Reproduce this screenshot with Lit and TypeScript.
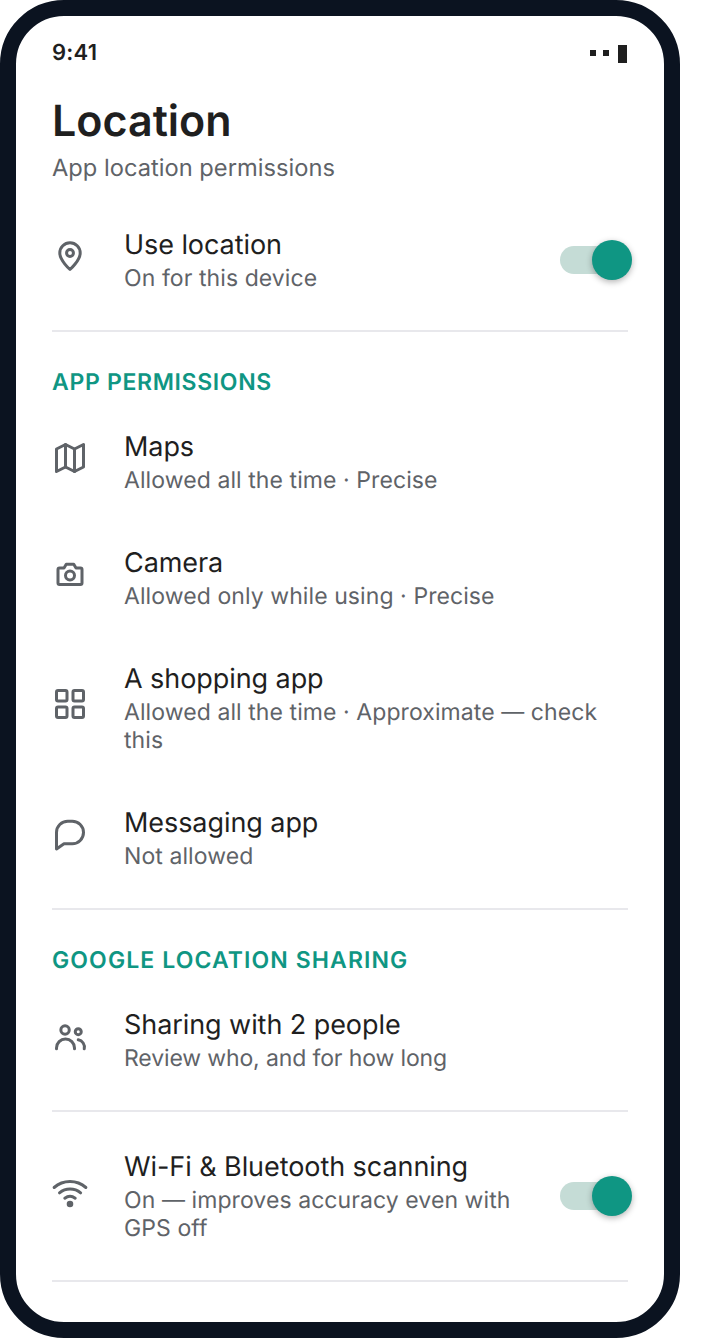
import { LitElement, html, css, svg, nothing } from "lit";
import { customElement } from "lit/decorators.js";

const icons: Record<string, unknown> = {
  pin: svg`<path d="M12 21s-6.8-6-6.8-11a6.8 6.8 0 0 1 13.6 0c0 5-6.8 11-6.8 11z"/><circle cx="12" cy="10" r="2.3"/>`,
  map: svg`<path d="M3 6l6-3 6 3 6-3v15l-6 3-6-3-6 3z"/><path d="M9 3v15M15 6v15"/>`,
  camera: svg`<path d="M5 8h3l1.5-2.5h5L16 8h3a1 1 0 0 1 1 1v9a1 1 0 0 1-1 1H5a1 1 0 0 1-1-1V9a1 1 0 0 1 1-1z"/><circle cx="12" cy="13" r="3"/>`,
  grid: svg`<rect x="3" y="3" width="7" height="7" rx="1"/><rect x="14" y="3" width="7" height="7" rx="1"/><rect x="3" y="14" width="7" height="7" rx="1"/><rect x="14" y="14" width="7" height="7" rx="1"/>`,
  chat: svg`<path d="M3 22V11a7.5 7.5 0 0 1 7.5-7.5h3A7.5 7.5 0 0 1 21 11a7.5 7.5 0 0 1-7.5 7.5H8z"/>`,
  users: svg`<circle cx="8.7" cy="8" r="2.8"/><circle cx="17.5" cy="9.1" r="2"/><path d="M3 20.5V20a6 6 0 0 1 12 0v.5"/><path d="M17.5 14.5a5 5 0 0 1 4 6"/>`,
  wifi: svg`<path d="M5 12.55a11 11 0 0 1 14.08 0"/><path d="M1.42 9a16 16 0 0 1 21.16 0"/><path d="M8.53 16.11a6 6 0 0 1 6.95 0"/><circle class="dot" cx="12" cy="20" r="1.2"/>`,
};

@customElement("app-root")
export class AppRoot extends LitElement {
  static styles = css`
    :host {
      display: block;
      width: 716px;
      height: 1338px;
      background: #fff;
      font-family: Inter, "Liberation Sans", sans-serif;
      text-rendering: geometricPrecision;
    }
    .phone {
      box-sizing: border-box;
      width: 680px;
      height: 1338px;
      border: 16px solid #0b1320;
      border-radius: 64px;
      background: #fff;
      padding: 0 36px;
      overflow: hidden;
    }
    .status {
      display: flex;
      justify-content: space-between;
      align-items: center;
      height: 28px;
      margin-top: 23px;
      font-size: 22px;
      font-weight: 600;
      letter-spacing: 0.25px;
      color: #1f1f1f;
    }
    .signal {
      display: flex;
      align-items: center;
      gap: 7px;
      margin-right: 1px;
    }
    .sq { width: 6px; height: 6px; background: #1f1f1f; }
    .bar { width: 9px; height: 18px; margin: 2px 0 0 2px; background: #1f1f1f; }
    h1 {
      margin: 26px 0 0;
      font-size: 43px;
      line-height: 56px;
      font-weight: 600;
      color: #1f1f1f;
    }
    .lead {
      font-size: 23.7px;
      line-height: 28px;
      color: #5f6368;
      margin-top: 5px;
    }
    .list { margin-top: 20px; }
    .row {
      display: flex;
      align-items: center;
      gap: 36px;
      padding: 26px 0;
    }
    .icon {
      flex: none;
      width: 36px;
      height: 36px;
      margin-bottom: 8px;
      fill: none;
      stroke: #5f6368;
      stroke-width: 2;
      stroke-linecap: round;
      stroke-linejoin: round;
    }
    .icon .dot { fill: #5f6368; }
    .text { flex: 1; min-width: 0; }
    .title {
      font-size: 27px;
      line-height: 34px;
      letter-spacing: -0.07px;
      color: #1f1f1f;
      margin-bottom: 2px;
    }
    .sub {
      font-size: 23px;
      line-height: 28px;
      letter-spacing: 0.08px;
      color: #5f6368;
    }
    .sub.snug { letter-spacing: -0.13px; }
    .toggle {
      flex: none;
      position: relative;
      width: 68px;
      height: 28px;
      border-radius: 14px;
      background: #c5dcd6;
    }
    .knob {
      position: absolute;
      right: -4px;
      top: -6px;
      width: 40px;
      height: 40px;
      border-radius: 50%;
      background: #0f9683;
      box-shadow: 0 2px 6px rgba(0, 0, 0, 0.3);
    }
    .divider {
      height: 2px;
      margin: 12px 0;
      background: #e8e8ec;
    }
    .section {
      padding-top: 24px;
      margin-bottom: 8px;
      font-size: 23px;
      line-height: 28px;
      font-weight: 600;
      letter-spacing: 1.1px;
      color: #0f9683;
    }
    .section.tight { letter-spacing: 0.67px; }
  `;

  private row(icon: string, title: string, sub: string, toggle = false, snug = false) {
    return html`<div class="row">
      <svg class="icon" viewBox="0 0 24 24">${icons[icon]}</svg>
      <div class="text">
        <div class="title">${title}</div>
        <div class="sub ${snug ? "snug" : ""}">${sub}</div>
      </div>
      ${toggle ? html`<div class="toggle"><div class="knob"></div></div>` : nothing}
    </div>`;
  }

  render() {
    return html`<div class="phone">
      <div class="status">
        <span>9:41</span>
        <div class="signal"><div class="sq"></div><div class="sq"></div><div class="bar"></div></div>
      </div>
      <h1>Location</h1>
      <div class="lead">App location permissions</div>
      <div class="list">
        ${this.row("pin", "Use location", "On for this device", true)}
        <div class="divider"></div>
        <div class="section tight">APP PERMISSIONS</div>
        ${this.row("map", "Maps", "Allowed all the time · Precise")}
        ${this.row("camera", "Camera", "Allowed only while using · Precise")}
        ${this.row("grid", "A shopping app", "Allowed all the time · Approximate — check this")}
        ${this.row("chat", "Messaging app", "Not allowed")}
        <div class="divider"></div>
        <div class="section">GOOGLE LOCATION SHARING</div>
        ${this.row("users", "Sharing with 2 people", "Review who, and for how long", false, true)}
        <div class="divider"></div>
        ${this.row("wifi", "Wi-Fi & Bluetooth scanning", "On — improves accuracy even with GPS off", true)}
        <div class="divider"></div>
      </div>
    </div>`;
  }
}
